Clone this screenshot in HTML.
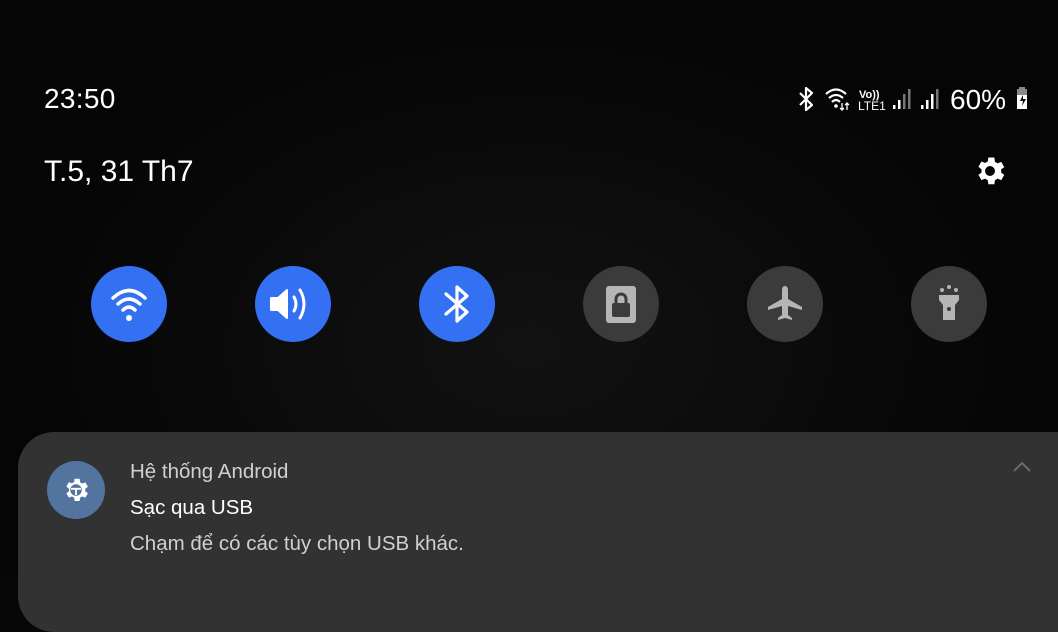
<!DOCTYPE html>
<html><head><meta charset="utf-8"><style>
*{margin:0;padding:0;box-sizing:border-box}
body{width:1058px;height:576px;overflow:hidden;background:#070707;font-family:"Liberation Sans","DejaVu Sans",sans-serif;color:#fff;position:relative}
.a{position:absolute}
.c{position:absolute;width:76px;height:76px;border-radius:50%;top:266px}
.b{background:#3470f2}.g{background:#3b3b3b}
.c svg{position:absolute;left:0;top:0}
</style></head><body>
<div class="a" style="left:0;top:0;width:1058px;height:576px;background:radial-gradient(ellipse at 50% 60%,#121212,#050505 70%)"></div>
<div class="a" style="left:44px;top:83px;font-size:28px;letter-spacing:0.3px">23:50</div>
<div class="a" style="left:44px;top:155px;font-size:30px">T.5, 31 Th7</div>
<!-- status icons -->
<svg class="a" style="left:795px;top:84px" width="240" height="30" viewBox="0 0 240 30">
<path d="M5 9 L17 21 L11 26 L11 4 L17 9 L5 21" fill="none" stroke="#fff" stroke-width="2.2" stroke-linejoin="round"/>
<path d="M31 10 Q41 1 51 10 M34 14 Q41 8 48 14 M37 18 Q41 14 45 18" fill="none" stroke="#fff" stroke-width="2.2"/>
<circle cx="41" cy="22" r="1.8" fill="#fff"/>
<path d="M47 19v7M45 24l2 2 2-2M52 26v-7M50 21l2-2 2 2" fill="none" stroke="#fff" stroke-width="1.3"/>
<text x="64" y="14" font-size="11" fill="#fff" font-family="Liberation Sans" font-weight="bold">Vo))</text>
<text x="63" y="26" font-size="12" fill="#fff" font-family="Liberation Sans">LTE1</text>
<rect x="98" y="21" width="2.5" height="4" fill="#fff"/><rect x="103" y="16" width="2.5" height="9" fill="#fff"/><rect x="108" y="10" width="2.5" height="15" fill="#777"/><rect x="113" y="5" width="2.5" height="20" fill="#777"/>
<rect x="126" y="21" width="2.5" height="4" fill="#fff"/><rect x="131" y="16" width="2.5" height="9" fill="#fff"/><rect x="136" y="10" width="2.5" height="15" fill="#fff"/><rect x="141" y="5" width="2.5" height="20" fill="#777"/>
<text x="155" y="25" font-size="28" fill="#fff" font-family="Liberation Sans">60%</text>
<rect x="224" y="3" width="6" height="3" fill="#888"/><rect x="222" y="5" width="10" height="7" fill="#888"/><rect x="222" y="11" width="10" height="14" fill="#fff"/>
<path d="M228 11l-3 6h3l-1 5 4-7h-3z" fill="#070707"/>
</svg>
<!-- settings gear -->
<svg class="a" style="left:972px;top:153px" width="36" height="36" viewBox="0 0 24 24"><path fill="#fff" d="M19.4 13a7.6 7.6 0 000-2l2.1-1.6-2-3.5-2.5 1a7.3 7.3 0 00-1.7-1L14.9 3h-4l-.4 2.7a7.3 7.3 0 00-1.7 1l-2.5-1-2 3.5L6.4 11a7.6 7.6 0 000 2l-2.1 1.6 2 3.5 2.5-1a7.3 7.3 0 001.7 1l.4 2.7h4l.4-2.7a7.3 7.3 0 001.7-1l2.5 1 2-3.5zM12 15.3a3.3 3.3 0 110-6.6 3.3 3.3 0 010 6.6z"/></svg>
<!-- tiles -->
<div class="c b" style="left:91px"><svg width="76" height="76"><path d="M22 32 Q38 17 54 32 M27 38 Q38 28 49 38 M32 44 Q38 38 44 44" fill="none" stroke="#fff" stroke-width="3.5" stroke-linecap="round"/><circle cx="38" cy="52" r="3" fill="#fff"/></svg></div>
<div class="c b" style="left:255px"><svg width="76" height="76"><path d="M16 32h7l9-8v28l-9-8h-7z" fill="#fff" stroke="#fff" stroke-width="2" stroke-linejoin="round"/><path d="M39 31 Q43 38 39 45 M45 24 Q53 38 45 52" fill="none" stroke="#fff" stroke-width="3" stroke-linecap="round"/></svg></div>
<div class="c b" style="left:419px"><svg width="76" height="76"><path d="M27 28 L48 46 L38 55 L38 21 L48 30 L27 48" fill="none" stroke="#fff" stroke-width="3.2" stroke-linejoin="round" stroke-linecap="round"/></svg></div>
<div class="c g" style="left:583px"><svg width="76" height="76"><rect x="23" y="20" width="30" height="37" rx="3" fill="#b5b5b5"/><rect x="29" y="37" width="18" height="14" rx="2" fill="#3b3b3b"/><path d="M33 37v-4a5 5 0 0110 0v4" fill="none" stroke="#3b3b3b" stroke-width="3"/></svg></div>
<div class="c g" style="left:747px"><svg width="76" height="76"><path d="M38 20c2 0 3 2 3 4v9l14 8v3l-14-4v9l4 3v2l-7-2-7 2v-2l4-3v-9l-14 4v-3l14-8v-9c0-2 1-4 3-4z" fill="#b5b5b5"/></svg></div>
<div class="c g" style="left:911px"><svg width="76" height="76"><circle cx="31" cy="24" r="2" fill="#b5b5b5"/><circle cx="38" cy="21" r="2" fill="#b5b5b5"/><circle cx="45" cy="24" r="2" fill="#b5b5b5"/><path d="M28 29h20v5l-4 5v15h-12v-15l-4-5z" fill="#b5b5b5"/><circle cx="38" cy="43" r="2" fill="#3b3b3b"/></svg></div>
<!-- notification -->
<div class="a" style="left:18px;top:432px;width:1080px;height:200px;background:#323232;border-radius:36px"></div>
<div class="a" style="left:47px;top:461px;width:58px;height:58px;border-radius:50%;background:#53749f"></div>
<svg class="a" style="left:61px;top:475px" width="30" height="30" viewBox="0 0 24 24"><path fill="#fff" d="M19.4 13a7.6 7.6 0 000-2l2.1-1.6-2-3.5-2.5 1a7.3 7.3 0 00-1.7-1L14.9 3h-4l-.4 2.7a7.3 7.3 0 00-1.7 1l-2.5-1-2 3.5L6.4 11a7.6 7.6 0 000 2l-2.1 1.6 2 3.5 2.5-1a7.3 7.3 0 001.7 1l.4 2.7h4l.4-2.7a7.3 7.3 0 001.7-1l2.5 1 2-3.5z"/><circle cx="12" cy="12" r="4.6" fill="#53749f"/><path d="M8 11h8M12 11v5" stroke="#fff" stroke-width="1.5"/></svg>
<div class="a" style="left:130px;top:460px;font-size:20.5px;color:#d0d0d0">Hệ thống Android</div>
<div class="a" style="left:130px;top:496px;font-size:20.5px;color:#fff">Sạc qua USB</div>
<div class="a" style="left:130px;top:532px;font-size:20.5px;color:#d0d0d0">Chạm để có các tùy chọn USB khác.</div>
<svg class="a" style="left:1012px;top:460px" width="20" height="14"><path d="M2 11L10 3l8 8" fill="none" stroke="#6a6a6a" stroke-width="2"/></svg>
</body></html>
